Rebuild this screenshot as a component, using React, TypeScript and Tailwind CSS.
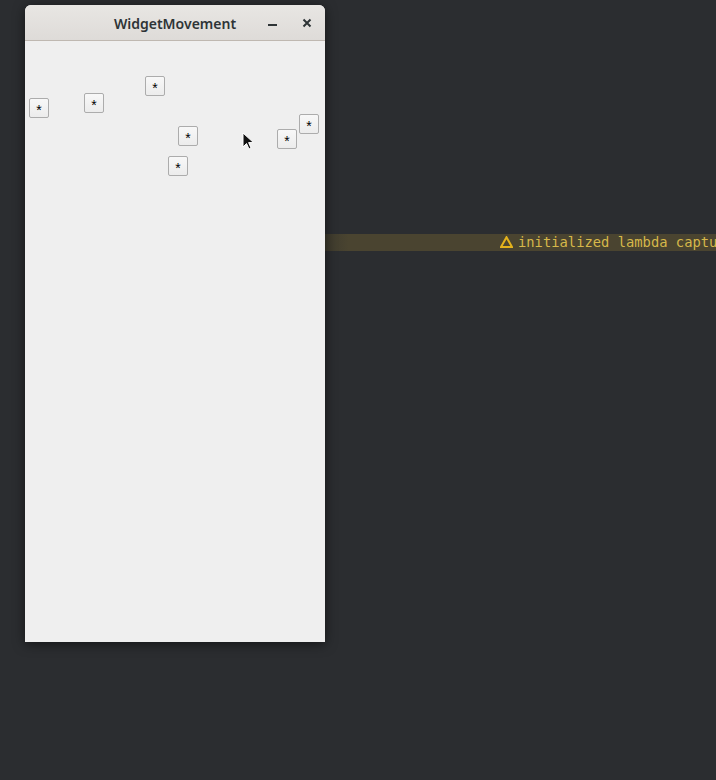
export default function App() {
  // button positions inside the window's client area (x from window left, y from client top)
  const buttons = [
    { x: 4, y: 57 },
    { x: 59, y: 52 },
    { x: 120, y: 35 },
    { x: 153, y: 85 },
    { x: 143, y: 115 },
    { x: 252, y: 88 },
    { x: 274, y: 73 },
  ];

  return (
    <div className="relative h-[780px] w-[716px] overflow-hidden bg-[#2b2d30]">
      {/* editor warning line behind the window */}
      <div className="absolute left-[325px] top-[234px] flex h-[17px] w-[391px] items-center bg-gradient-to-r from-[#3d3a2e] via-[#4a4430] via-[6%] to-[#4a4430]">
        <div className="ml-[175px] flex items-center gap-[5px] font-['DejaVu_Sans_Mono',monospace] text-[13.8px] leading-none whitespace-nowrap text-[#d6b84a]">
          <svg width="13" height="12" viewBox="0 0 13 12" className="mb-[2px]">
            <path d="M6.5 1.2 L12 11 L1 11 Z" fill="none" stroke="#e3b21c" strokeWidth="2" strokeLinejoin="miter" />
          </svg>
          <span>initialized lambda captu</span>
        </div>
      </div>

      {/* window */}
      <div className="absolute left-[25px] top-[5px] flex h-[637px] w-[300px] flex-col overflow-hidden rounded-t-[6px] bg-[#efefef] shadow-[0_2px_12px_rgba(0,0,0,0.55)]">
        <div className="relative flex h-[36px] shrink-0 items-center justify-center border-b border-[#bfb8b1] bg-gradient-to-b from-[#e8e6e3] to-[#dedbd8]">
          <span className="mt-[1px] font-['Noto_Sans',sans-serif] text-[14px] font-semibold text-[#2e3436]">WidgetMovement</span>
          <div className="absolute right-[48px] top-[19px] h-[2px] w-[9px] bg-[#2e3436]" />
          <svg className="absolute right-[13px] top-[13px]" width="10" height="10" viewBox="0 0 10 10">
            <path d="M1.5 1.5 L8.5 8.5 M8.5 1.5 L1.5 8.5" stroke="#2e3436" strokeWidth="2" />
          </svg>
        </div>
        <div className="relative flex-1 bg-[#efefef]">
          {buttons.map((b, i) => (
            <button
              key={i}
              className="absolute flex h-[20px] w-[20px] items-center justify-center rounded-[2px] border border-[#acacac] bg-gradient-to-b from-[#f8f8f8] to-[#ececec] font-['Liberation_Sans',sans-serif] text-[14px] leading-none text-black"
              style={{ left: b.x, top: b.y }}
            >
              <span className="mt-[3px]">*</span>
            </button>
          ))}
        </div>
      </div>

      {/* mouse cursor */}
      <svg className="absolute left-[242px] top-[132px]" width="14" height="20" viewBox="0 0 14 20">
        <path d="M1 1 L1 15 L4.5 11.5 L7 17 L9 16 L6.6 10.6 L11.5 10.6 Z" fill="#111" stroke="#fff" strokeWidth="1" />
      </svg>
    </div>
  );
}
